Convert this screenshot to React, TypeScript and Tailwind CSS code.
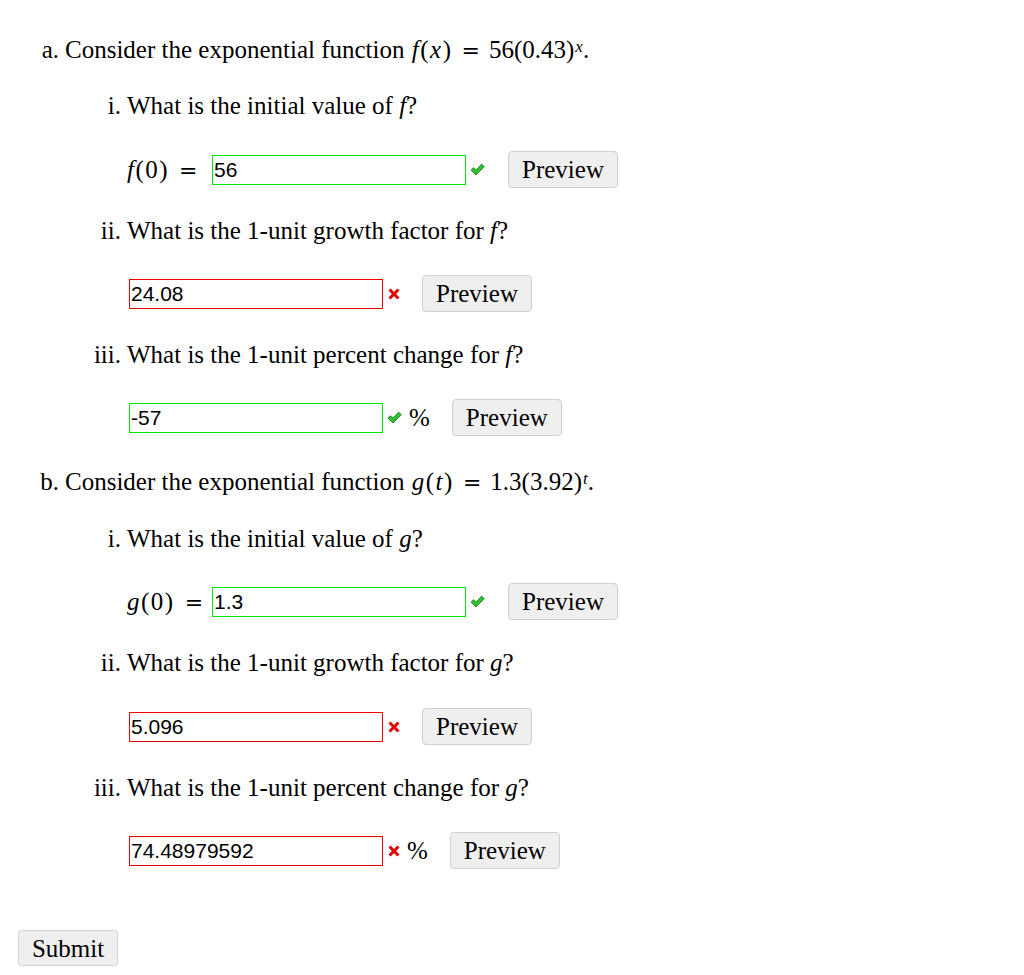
import React from 'react';

const serif = { fontFamily: '"Liberation Serif", "Times New Roman", serif' };
const eqFont = { fontFamily: '"DejaVu Serif", serif' };

const Check = () => (
  <svg width="15" height="13" viewBox="0 0 15 13" className="shrink-0">
    <path
      d="M1 7.2 L3.6 4.8 L6 7.3 L11.6 1.2 L14.2 3.6 L6 12 Z"
      fill="#2fc52f"
      stroke="#137a13"
      strokeWidth="0.9"
      strokeLinejoin="round"
    />
  </svg>
);

const Cross = () => (
  <svg width="12" height="12" viewBox="0 0 12 12" className="shrink-0">
    <path
      d="M2.6 0.8 L6 4.2 L9.4 0.8 L11.2 2.6 L7.8 6 L11.2 9.4 L9.4 11.2 L6 7.8 L2.6 11.2 L0.8 9.4 L4.2 6 L0.8 2.6 Z"
      fill="#e80000"
      stroke="#b00000"
      strokeWidth="0.5"
      strokeLinejoin="round"
    />
  </svg>
);

const Btn = ({ label, className = '' }: { label: string; className?: string }) => (
  <button
    className={`h-[37px] w-[110px] bg-[#efefef] border border-[#d0d0d0] rounded-[4px] text-[25px] text-black leading-none ${className}`}
    style={serif}
  >
    {label}
  </button>
);

const Answer = ({ value, ok, width }: { value: string; ok: boolean; width: string }) => (
  <input
    readOnly
    value={value}
    className={`h-[30px] ${width} border ${ok ? 'border-[#00e600]' : 'border-[#ee0000]'} px-[1px] text-[21px] text-black outline-none bg-white`}
    style={{ fontFamily: '"Liberation Sans", Arial, sans-serif' }}
  />
);

const Eq = ({ className = '' }: { className?: string }) => (
  <span className={`text-[22px] ${className}`} style={eqFont}>
    =
  </span>
);

const Row = ({
  label,
  value,
  ok,
  percent,
  mt,
}: {
  label?: React.ReactNode;
  value: string;
  ok: boolean;
  percent?: boolean;
  mt: string;
}) => (
  <div className={`flex items-center h-[37px] ${mt} ${label ? 'pl-[127px]' : 'pl-[129px]'}`}>
    {label && <span className="w-[85px] shrink-0 text-[25px] whitespace-nowrap">{label}</span>}
    <Answer value={value} ok={ok} width="w-[254px]" />
    <span className={ok ? 'ml-[4px]' : 'ml-[5px]'}>{ok ? <Check /> : <Cross />}</span>
    {percent && <span className="text-[25px] ml-[7px] leading-none">%</span>}
    <Btn label="Preview" className={ok && !percent ? 'ml-[23px]' : 'ml-[22px]'} />
  </div>
);

const Line = ({ marker, outer, children, mt }: { marker: string; outer?: boolean; children: React.ReactNode; mt: string }) => (
  <div className={`flex items-center h-[26px] text-[25px] whitespace-nowrap ${mt}`}>
    <span className={`${outer ? 'w-[59px]' : 'w-[121px]'} text-right shrink-0`}>{marker}</span>
    <span className="ml-[6px]">{children}</span>
  </div>
);

const I = ({ children }: { children: React.ReactNode }) => <i className="italic">{children}</i>;

export default function App() {
  return (
    <div className="w-[1024px] h-[975px] bg-white text-black overflow-hidden pt-[37px]" style={serif}>
      <Line marker="a." outer mt="mt-0">
        Consider the exponential function{' '}
        <span className="ml-[1px]">
          <span className="tracking-[1.5px]">
            <I>f</I>(<I>x</I>)
          </span>
          <Eq className="mx-[9px]" />
          56(0.43)
          <sup className="text-[17px] italic relative -top-[6px] ml-[1px]">x</sup>.
        </span>
      </Line>
      <Line marker="i." mt="mt-[30px]">
        What is the initial value of <I>f</I>?
      </Line>
      <Row
        label={
          <>
            <span className="tracking-[1.5px]">
              <I>f</I>(0)
            </span>
            <Eq className="ml-[10px]" />
          </>
        }
        value="56"
        ok
        mt="mt-[32px]"
      />
      <Line marker="ii." mt="mt-[30px]">
        What is the 1-unit growth factor for <I>f</I>?
      </Line>
      <Row value="24.08" ok={false} mt="mt-[31px]" />
      <Line marker="iii." mt="mt-[30px]">
        What is the 1-unit percent change for <I>f</I>?
      </Line>
      <Row value="-57" ok percent mt="mt-[31px]" />

      <Line marker="b." outer mt="mt-[33px]">
        Consider the exponential function{' '}
        <span className="ml-[1px]">
          <span className="tracking-[1.5px]">
            <I>g</I>(<I>t</I>)
          </span>
          <Eq className="mx-[9px]" />
          1.3(3.92)
          <sup className="text-[17px] italic relative -top-[6px] ml-[1px]">t</sup>.
        </span>
      </Line>
      <Line marker="i." mt="mt-[31px]">
        What is the initial value of <I>g</I>?
      </Line>
      <Row
        label={
          <>
            <span className="tracking-[1.5px]">
              <I>g</I>(0)
            </span>
            <Eq className="ml-[10px]" />
          </>
        }
        value="1.3"
        ok
        mt="mt-[31px]"
      />
      <Line marker="ii." mt="mt-[30px]">
        What is the 1-unit growth factor for <I>g</I>?
      </Line>
      <Row value="5.096" ok={false} mt="mt-[32px]" />
      <Line marker="iii." mt="mt-[30px]">
        What is the 1-unit percent change for <I>g</I>?
      </Line>
      <Row value="74.48979592" ok={false} percent mt="mt-[31px]" />

      <div className="mt-[61px] pl-[18px]">
        <button
          className="h-[36px] w-[100px] bg-[#efefef] border border-[#d0d0d0] rounded-[4px] text-[25px] leading-none"
          style={serif}
        >
          Submit
        </button>
      </div>
    </div>
  );
}
